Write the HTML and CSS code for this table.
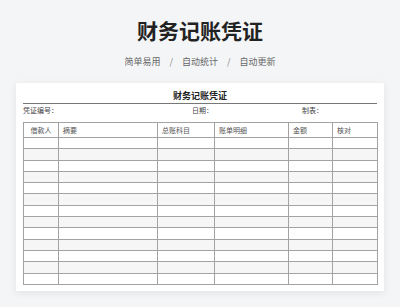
FILE: index.html
```html
<!DOCTYPE html>
<html lang="zh-CN">
<head>
<meta charset="utf-8">
<title>财务记账凭证</title>
<link rel="stylesheet" href="styles.css">
</head>
<body>
<header class="hero">
  <h1 class="hero-title">财务记账凭证</h1>
  <div class="tags">
    <span>简单易用</span><span class="sep">/</span><span>自动统计</span><span class="sep">/</span><span>自动更新</span>
  </div>
</header>
<main class="card">
  <div class="doc-title">财务记账凭证</div>
  <div class="info">
    <span>凭证编号：</span><span>日期：</span><span>制表：</span>
  </div>
  <table class="sheet">
    <colgroup>
      <col class="c1"><col class="c2"><col class="c3"><col class="c4"><col class="c5"><col class="c6">
    </colgroup>
    <thead>
      <tr><th class="center">借款人</th><th>摘要</th><th>总账科目</th><th>账单明细</th><th>金额</th><th>核对</th></tr>
    </thead>
    <tbody>
      <tr><td></td><td></td><td></td><td></td><td></td><td></td></tr>
      <tr><td></td><td></td><td></td><td></td><td></td><td></td></tr>
      <tr><td></td><td></td><td></td><td></td><td></td><td></td></tr>
      <tr><td></td><td></td><td></td><td></td><td></td><td></td></tr>
      <tr><td></td><td></td><td></td><td></td><td></td><td></td></tr>
      <tr><td></td><td></td><td></td><td></td><td></td><td></td></tr>
      <tr><td></td><td></td><td></td><td></td><td></td><td></td></tr>
      <tr><td></td><td></td><td></td><td></td><td></td><td></td></tr>
      <tr><td></td><td></td><td></td><td></td><td></td><td></td></tr>
      <tr><td></td><td></td><td></td><td></td><td></td><td></td></tr>
      <tr><td></td><td></td><td></td><td></td><td></td><td></td></tr>
      <tr><td></td><td></td><td></td><td></td><td></td><td></td></tr>
      <tr><td></td><td></td><td></td><td></td><td></td><td></td></tr>
    </tbody>
  </table>
</main>
</body>
</html>
```
FILE: styles.css
```css
html, body {
  margin: 0;
  padding: 0;
}
body {
  background: #f4f5f7;
  font-family: "Noto Sans CJK SC", "Noto Sans", sans-serif;
  width: 400px;
  height: 307px;
  overflow: hidden;
}
.hero {
  padding-top: 14px;
  text-align: center;
}
.hero-title {
  margin: 0;
  font-size: 21px;
  line-height: 32px;
  font-weight: 700;
  color: #222;
}
.tags {
  margin-top: 9px;
  display: flex;
  justify-content: center;
  gap: 9px;
  font-size: 9px;
  line-height: 14px;
  color: #666;
}
.sep {
  color: #888;
}
.card {
  margin: 14px 16px 0;
  height: 208px;
  box-sizing: border-box;
  padding: 6px 7px 0;
  background: #fff;
  box-shadow: 0 2px 8px rgba(0, 0, 0, 0.08);
}
.doc-title {
  font-size: 9px;
  line-height: 14px;
  font-weight: 700;
  color: #222;
  text-align: center;
  border-bottom: 1px solid #777;
}
.info {
  display: grid;
  grid-template-columns: 169px 110px 1fr;
  font-size: 7px;
  line-height: 10px;
  color: #444;
  margin-top: 1px;
  margin-bottom: 7px;
}
.sheet {
  width: 354px;
  table-layout: fixed;
  border-collapse: collapse;
  color: #555;
  font-size: 7px;
}
.c1 { width: 35px; }
.c2 { width: 99px; }
.c3 { width: 57px; }
.c4 { width: 74px; }
.c5 { width: 44px; }
.c6 { width: 45px; }
.sheet th,
.sheet td {
  border: 1px solid #a3a3a3;
  padding: 0 0 0 4px;
}
.sheet th {
  height: 14px;
  font-weight: 400;
  text-align: left;
  line-height: 10px;
}
.sheet th.center {
  text-align: center;
  padding-left: 0;
}
.sheet td {
  height: 10.3px;
  line-height: 0;
}
.sheet tbody tr:nth-child(even) td {
  background: #f6f6f6;
}
```
